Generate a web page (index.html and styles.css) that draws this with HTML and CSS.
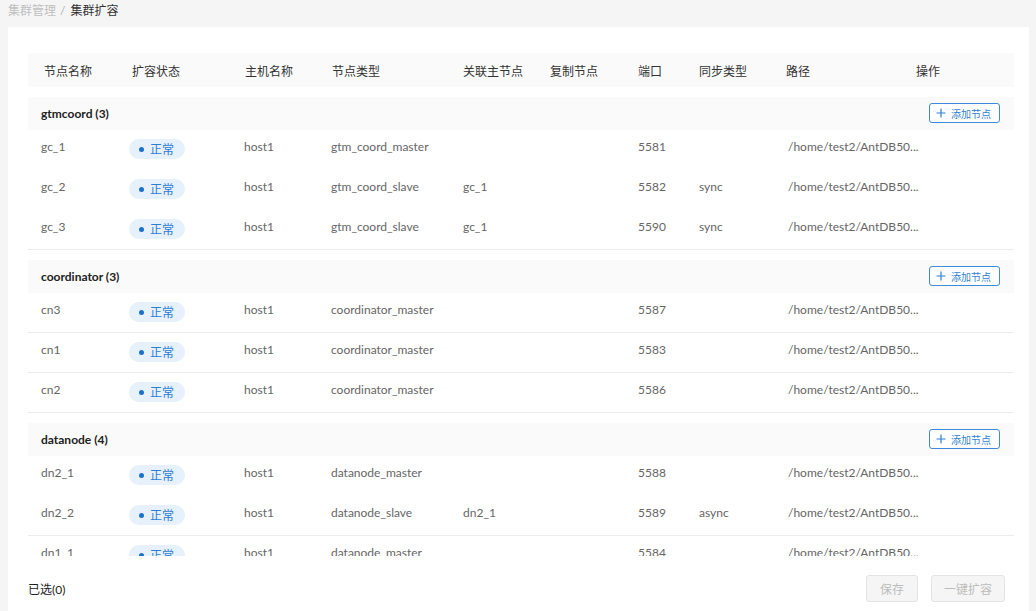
FILE: index.html
```html
<!DOCTYPE html>
<html lang="zh">
<head>
<meta charset="utf-8">
<title>集群扩容</title>
<link rel="stylesheet" href="styles.css">
</head>
<body>
<div class="crumb"><span class="crumb-link">集群管理</span><span class="crumb-sep">/</span><span class="crumb-cur">集群扩容</span></div>
<div class="card">
  <div class="table">
    <div class="thead grid">
      <div>节点名称</div><div>扩容状态</div><div>主机名称</div><div>节点类型</div><div>关联主节点</div><div>复制节点</div><div>端口</div><div>同步类型</div><div>路径</div><div>操作</div>
    </div>
    <div class="tbody">
      <div class="group">
        <div class="ghead"><span>gtmcoord (3)</span><button class="add"><svg width="10" height="10" viewBox="0 0 10 10"><path d="M5 0.5V9.5M0.5 5H9.5" stroke="#2f7fd6" stroke-width="1.2" fill="none"/></svg>添加节点</button></div>
        <div class="row grid"><div>gc_1</div><div><span class="badge"><i></i>正常</span></div><div>host1</div><div>gtm_coord_master</div><div></div><div></div><div>5581</div><div></div><div>/home/test2/AntDB50...</div><div></div></div>
        <div class="row grid"><div>gc_2</div><div><span class="badge"><i></i>正常</span></div><div>host1</div><div>gtm_coord_slave</div><div>gc_1</div><div></div><div>5582</div><div>sync</div><div>/home/test2/AntDB50...</div><div></div></div>
        <div class="row grid b"><div>gc_3</div><div><span class="badge"><i></i>正常</span></div><div>host1</div><div>gtm_coord_slave</div><div>gc_1</div><div></div><div>5590</div><div>sync</div><div>/home/test2/AntDB50...</div><div></div></div>
      </div>
      <div class="group">
        <div class="ghead"><span>coordinator (3)</span><button class="add"><svg width="10" height="10" viewBox="0 0 10 10"><path d="M5 0.5V9.5M0.5 5H9.5" stroke="#2f7fd6" stroke-width="1.2" fill="none"/></svg>添加节点</button></div>
        <div class="row grid b"><div>cn3</div><div><span class="badge"><i></i>正常</span></div><div>host1</div><div>coordinator_master</div><div></div><div></div><div>5587</div><div></div><div>/home/test2/AntDB50...</div><div></div></div>
        <div class="row grid b"><div>cn1</div><div><span class="badge"><i></i>正常</span></div><div>host1</div><div>coordinator_master</div><div></div><div></div><div>5583</div><div></div><div>/home/test2/AntDB50...</div><div></div></div>
        <div class="row grid b"><div>cn2</div><div><span class="badge"><i></i>正常</span></div><div>host1</div><div>coordinator_master</div><div></div><div></div><div>5586</div><div></div><div>/home/test2/AntDB50...</div><div></div></div>
      </div>
      <div class="group">
        <div class="ghead"><span>datanode (4)</span><button class="add"><svg width="10" height="10" viewBox="0 0 10 10"><path d="M5 0.5V9.5M0.5 5H9.5" stroke="#2f7fd6" stroke-width="1.2" fill="none"/></svg>添加节点</button></div>
        <div class="row grid"><div>dn2_1</div><div><span class="badge"><i></i>正常</span></div><div>host1</div><div>datanode_master</div><div></div><div></div><div>5588</div><div></div><div>/home/test2/AntDB50...</div><div></div></div>
        <div class="row grid b"><div>dn2_2</div><div><span class="badge"><i></i>正常</span></div><div>host1</div><div>datanode_slave</div><div>dn2_1</div><div></div><div>5589</div><div>async</div><div>/home/test2/AntDB50...</div><div></div></div>
        <div class="row grid b"><div>dn1_1</div><div><span class="badge"><i></i>正常</span></div><div>host1</div><div>datanode_master</div><div></div><div></div><div>5584</div><div></div><div>/home/test2/AntDB50...</div><div></div></div>
      </div>
    </div>
  </div>
  <div class="footer">
    <span class="selected">已选(0)</span>
    <div class="actions"><button class="btn save">保存</button><button class="btn expand">一键扩容</button></div>
  </div>
</div>
</body>
</html>
```
FILE: styles.css
```css
* { box-sizing: border-box; }
html, body { margin: 0; padding: 0; }
body {
  background: #f5f5f5;
  font-family: "Lato", "Noto Sans CJK SC", sans-serif;
  font-size: 12px;
  color: #333;
  height: 611px;
  overflow: hidden;
}
.crumb {
  height: 27px;
  padding: 0 8px;
  line-height: 21px;
  font-size: 12px;
}
.crumb-link { color: #bfbfbf; }
.crumb-sep { color: #b0b0b0; margin: 0 5px 0 4px; }
.crumb-cur { color: #333; }

.card {
  background: #fff;
  margin: 0 7px 0 8px;
  padding: 26px 15px 0 20px;
  height: 584px;
}
.table { width: 986px; }
.grid {
  display: grid;
  grid-template-columns: 88px 113px 87px 131px 87px 88px 61px 87px 130px 114px;
}
.thead {
  background: #fafafa;
  height: 34px;
  align-items: center;
  color: #333;
}
.thead > div { padding-left: 16px; }
.tbody {
  height: 469px;
  overflow: hidden;
}
.group { margin-top: 9.5px; }
.ghead {
  background: #fafafa;
  height: 33.5px;
  display: flex;
  align-items: center;
  justify-content: space-between;
  padding: 0 14px 0 13px;
  font-weight: bold;
  color: #222;
}
.add {
  display: flex;
  align-items: center;
  gap: 5px;
  height: 20px;
  width: 71px;
  padding: 0 0 0 6px;
  border: 1px solid #3e8ad9;
  border-radius: 3px;
  background: #fff;
  color: #2f7fd6;
  font-family: "Noto Sans CJK SC", sans-serif;
  font-size: 10px;
  font-weight: normal;
}
.row {
  height: 40px;
  color: #666;
}
.row.b { border-bottom: 1px solid #ececec; }
.row > div {
  padding-left: 16px;
  padding-top: 7px;
  line-height: 20px;
  white-space: nowrap;
}
.row > div:nth-child(1), .row > div:nth-child(2) { padding-left: 13px; }
.row > div:nth-child(3), .row > div:nth-child(4) { padding-left: 15px; }
.row > div:nth-child(9) { padding-left: 18px; }
.badge {
  display: inline-flex;
  align-items: center;
  height: 20px;
  margin-top: 2px;
  padding: 0 11px 0 10px;
  border-radius: 10px;
  background: #e7f1fb;
  color: #2b7dd6;
  font-family: "Noto Sans CJK SC", sans-serif;
}
.badge i {
  width: 5px;
  height: 5px;
  border-radius: 50%;
  background: #1a72d0;
  margin-right: 6px;
}
.footer {
  display: flex;
  justify-content: space-between;
  align-items: center;
  width: 986px;
  padding: 19px 9px 0 0;
}
.selected { color: #222; font-size: 12px; }
.actions { display: flex; gap: 13px; }
.btn {
  height: 27px;
  border: 1px solid #e3e3e3;
  border-radius: 3px;
  background: #f5f5f5;
  color: #bcbcbc;
  font-family: "Noto Sans CJK SC", sans-serif;
  font-size: 12px;
}
.save { width: 52px; }
.expand { width: 74px; }
```
